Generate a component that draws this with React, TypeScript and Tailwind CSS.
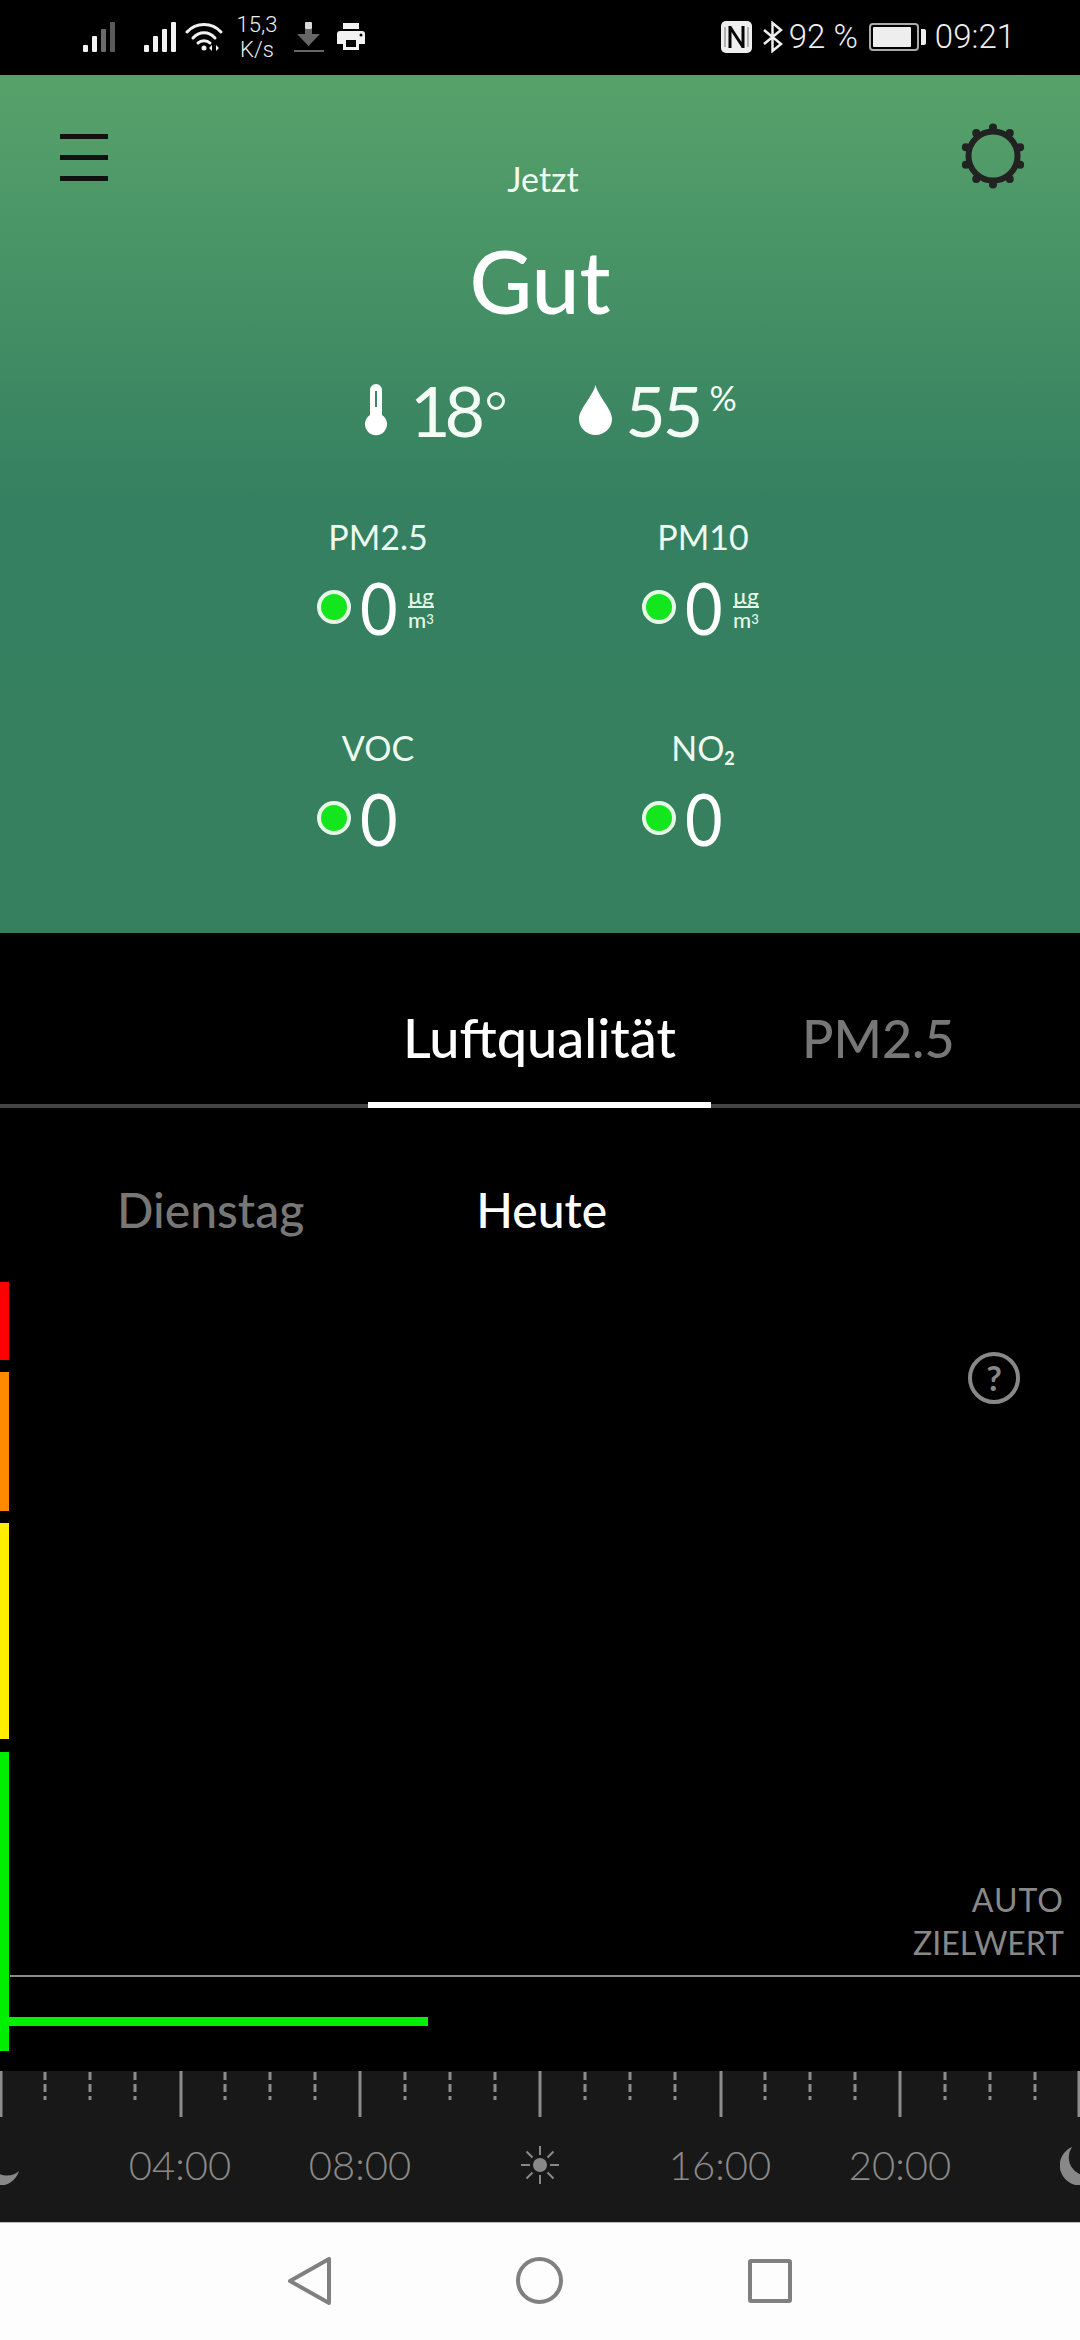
const lato = { fontFamily: 'Lato, sans-serif' };

const SignalIcon = ({ dim }: { dim?: boolean }) => (
  <svg width="33" height="32" viewBox="0 0 33 32">
    <rect x="0" y="24" width="5" height="7" rx="1" fill="#f2f2f2" />
    <rect x="9" y="15" width="5" height="16" rx="1" fill="#f2f2f2" />
    <rect x="18" y="8" width="5" height="23" rx="1" fill={dim ? '#6b6b6b' : '#f2f2f2'} />
    <rect x="27" y="1" width="5" height="30" rx="1" fill={dim ? '#5a5a5a' : '#f2f2f2'} />
  </svg>
);

const WifiIcon = () => (
  <svg width="38" height="32" viewBox="0 0 38 32" fill="none" stroke="#f2f2f2" strokeWidth="3" strokeLinecap="round">
    <path d="M2 11C11 1 27 1 36 11" />
    <path d="M8 17C14 10 24 10 30 17" />
    <path d="M13 22C16 19 22 19 25 22" />
    <circle cx="19" cy="27" r="2.5" fill="#f2f2f2" stroke="none" />
    <path d="M27 24v6l-3-3zM31 24v6l3-3z" fill="#f2f2f2" stroke="none" />
  </svg>
);

const DownloadIcon = () => (
  <svg width="30" height="32" viewBox="0 0 30 32">
    <rect x="11" y="1" width="7" height="7" rx="1" fill="#d8d8d8" />
    <path d="M11 8h7v5h8L14.500 25 3 13h8z" fill="#666" />
    <rect x="0" y="29" width="30" height="2" fill="#666" />
  </svg>
);

const PrinterIcon = () => (
  <svg width="28" height="28" viewBox="0 0 28 28">
    <path d="M6 0h16v6H6z" fill="#f2f2f2" />
    <path
      fillRule="evenodd"
      d="M3 8h22a3 3 0 0 1 3 3v10h-6v6H6v-6H0V11a3 3 0 0 1 3-3zM9 17v7h10v-7z"
      fill="#f2f2f2"
    />
    <circle cx="24" cy="12" r="1.500" fill="#000" />
  </svg>
);

const NfcIcon = () => (
  <svg width="31" height="32" viewBox="0 0 31 32">
    <rect x="0" y="0" width="31" height="32" rx="5" fill="#eeeeee" />
    <path d="M9 5v22M22 5v22M9 6l13 20" fill="none" stroke="#000" strokeWidth="3" />
    <path d="M4 6v20M27 6v20" stroke="#777" strokeWidth="1" />
  </svg>
);

const BluetoothIcon = () => (
  <svg width="21" height="32" viewBox="0 0 21 32" fill="none" stroke="#eeeeee" strokeWidth="2.500">
    <path d="M2 9l17 14-8.500 7V2L19 9 2 23" />
  </svg>
);

const BatteryIcon = () => (
  <div className="flex items-center gap-[2px]">
    <div className="h-[28px] w-[50px] rounded-[4px] border-2 border-[#aaaaaa] p-[2px]">
      <div className="h-full w-[92%] rounded-[1px] bg-[#eeeeee]" />
    </div>
    <div className="h-[16px] w-[5px] rounded-r-[2px] bg-[#eeeeee]" />
  </div>
);

const StatusBar = () => (
  <div
    className="flex h-[75px] items-center justify-between bg-black pb-[2px] pl-[83px] pr-[65px] text-[#eeeeee]"
    style={{ fontFamily: 'Roboto, sans-serif' }}
  >
    <div className="flex items-center">
      <SignalIcon dim />
      <div className="ml-[28px]">
        <SignalIcon />
      </div>
      <div className="ml-[8px]">
        <WifiIcon />
      </div>
      <div className="ml-[12px] flex w-[44px] flex-col items-center text-[22px] font-light leading-[25px]">
        <span>15,3</span>
        <span>K/s</span>
      </div>
      <div className="ml-[15px]">
        <DownloadIcon />
      </div>
      <div className="ml-[13px]">
        <PrinterIcon />
      </div>
    </div>
    <div className="flex items-center">
      <NfcIcon />
      <div className="ml-[10px]">
        <BluetoothIcon />
      </div>
      <span className="ml-[6px] text-[33px] font-light">92 %</span>
      <div className="ml-[11px]">
        <BatteryIcon />
      </div>
      <span className="ml-[9px] text-[33px] font-light">09:21</span>
    </div>
  </div>
);

const GearIcon = () => {
  const teeth = [0, 1, 2, 3, 4, 5, 6, 7, 8, 9].map((i) => {
    const a = ((-90 + i * 36) * Math.PI) / 180;
    return { x: 33 + 28.5 * Math.cos(a), y: 33 + 28.5 * Math.sin(a) };
  });
  return (
    <svg width="66" height="66" viewBox="0 0 66 66">
      <circle cx="33" cy="33" r="24.500" fill="none" stroke="#222222" strokeWidth="6" />
      {teeth.map((t, i) => (
        <circle key={i} cx={t.x} cy={t.y} r="4" fill="#222222" />
      ))}
    </svg>
  );
};

const ThermometerIcon = () => (
  <svg width="22" height="52" viewBox="0 0 22 52">
    <path
      fillRule="evenodd"
      d="M5 31V6a6 6 0 0 1 12 0v25a11 11 0 1 1-12 0zM10 7v16h2V7z"
      fill="#ffffff"
    />
  </svg>
);

const DropIcon = () => (
  <svg width="33" height="50" viewBox="0 0 33 50">
    <path d="M16.500 0C19 11 33 24 33 34a16.500 16 0 0 1-33 0C0 24 14 11 16.500 0z" fill="#ffffff" />
  </svg>
);

const Metric = ({ label, sub, unit }: { label: string; sub?: string; unit?: boolean }) => (
  <div className="h-[211px] w-[325px]">
    <div className="flex h-[40px] w-[122px] items-center justify-center whitespace-nowrap text-[34px] leading-[40px] text-[#eefaf0]">
      {label}
      {sub && <sub className="mt-[10px] text-[18px] font-bold leading-none">{sub}</sub>}
    </div>
    <div className="mt-[24px] flex h-[52px] items-center">
      <div className="h-[34px] w-[34px] rounded-full border-[4px] border-[#e6f7e6] bg-[#14e61e]" />
      <span className="ml-[9px] inline-block w-[38px] origin-left scale-x-[0.9] text-[72px] leading-[52px] text-white">
        0
      </span>
      {unit && (
        <div className="ml-[10px] flex flex-col items-center text-[22px] font-medium leading-[17px] text-[#e6f7e6]">
          <span className="border-b-2 border-[#e6f7e6] pb-[2px]">µg</span>
          <span className="pt-[3px]">
            m<span className="align-top text-[13px]">3</span>
          </span>
        </div>
      )}
    </div>
  </div>
);

const Hero = () => (
  <div className="h-[858px] bg-gradient-to-b from-[#57a26a] via-[#348060] via-[50%] to-[#37805f] pt-[48px]" style={lato}>
    <div className="grid h-[76px] grid-cols-[1fr_auto_1fr] pl-[60px] pr-[54px]">
      <div className="mt-[11px] flex flex-col gap-[16px]">
        <div className="h-[5px] w-[48px] bg-[#111111]" />
        <div className="h-[5px] w-[48px] bg-[#111111]" />
        <div className="h-[5px] w-[48px] bg-[#111111]" />
      </div>
      <div className="pt-[37px] text-[34px] leading-[38px] text-[#f0fbf2]">Jetzt</div>
      <div className="flex justify-end">
        <GearIcon />
      </div>
    </div>
    <div className="mt-[40px] text-center text-[86px] font-medium leading-[84px] text-white">Gut</div>
    <div className="mt-[52px] flex h-[70px] items-center pl-[365px] text-[#f4fcf6]">
      <ThermometerIcon />
      <span className="ml-[23px] text-[70px] leading-[70px] tracking-[-6px]">18</span>
      <span className="mb-[18px] ml-[8px] h-[18px] w-[18px] rounded-full border-[3px] border-[#f4fcf6]" />
      <div className="ml-[74px]">
        <DropIcon />
      </div>
      <span className="ml-[13px] text-[70px] leading-[70px] tracking-[-3px]">55</span>
      <span className="mb-[24px] ml-[9px] text-[34px] leading-[30px]">%</span>
    </div>
    <div className="mt-[72px] flex w-[1080px] flex-wrap pl-[317px]">
      <Metric label="PM2.5" unit />
      <Metric label="PM10" unit />
      <Metric label="VOC" />
      <Metric label="NO" sub="2" />
    </div>
  </div>
);

const Tabs = () => (
  <div style={lato}>
    <div className="flex h-[175px] border-b-[4px] border-[#444444] pl-[368px]">
      <div className="-mb-[4px] flex h-[175px] w-[343px] items-center justify-center border-b-[6px] border-white pt-[41px] text-[54px] font-medium leading-none text-white">
        Luftqualität
      </div>
      <div className="ml-[91px] flex h-[175px] items-center pb-[6px] pt-[41px] text-[52px] font-medium leading-none text-[#777777]">
        PM2.5
      </div>
    </div>
    <div className="flex h-[132px] items-end text-[48px] font-medium leading-[60px]">
      <span className="ml-[117px] text-[#777777]">Dienstag</span>
      <span className="ml-[172px] text-white">Heute</span>
    </div>
  </div>
);

// level scale on the left edge plus the auto target line and the reading
const Chart = () => (
  <div className="relative h-[831px]" style={lato}>
    <svg width="1080" height="831" viewBox="0 0 1080 831" className="block">
      <rect x="0" y="42" width="9" height="78" fill="#ff0000" />
      <rect x="0" y="132" width="9" height="139" fill="#ff8a00" />
      <rect x="0" y="283" width="9" height="216" fill="#ffee00" />
      <rect x="0" y="512" width="9" height="299" fill="#00ee00" />
      <rect x="10" y="735" width="1070" height="2" fill="#8a8a8a" />
      <rect x="0" y="777" width="428" height="9" fill="#00f000" />
    </svg>
    <div className="absolute left-[968px] top-[112px] flex h-[52px] w-[52px] items-center justify-center rounded-full border-[4px] border-[#888888] text-[34px] font-bold leading-none text-[#888888]">
      ?
    </div>
    <div className="absolute right-[16px] top-[638px] text-right text-[32px] leading-[43px] text-[#888888]">
      <div className="tracking-[1px]">AUTO</div>
      <div>ZIELWERT</div>
    </div>
  </div>
);

const Ruler = () => {
  const major = [1, 181, 360, 540, 721, 900, 1079];
  const minor = [45, 90, 135, 225, 270, 315, 405, 450, 495, 585, 630, 675, 765, 810, 855, 945, 990, 1035];
  return (
    <svg width="1080" height="46" viewBox="0 0 1080 46" className="block">
      {major.map((x) => (
        <rect key={x} x={x - 1.5} y="0" width="3" height="46" fill="#8c8c8c" />
      ))}
      {minor.map((x) => (
        <path key={x} d={`M${x} 1V29`} stroke="#8c8c8c" strokeWidth="3" strokeDasharray="8 4" />
      ))}
    </svg>
  );
};

const SunIcon = () => (
  <svg width="40" height="40" viewBox="0 0 40 40" stroke="#888888" strokeWidth="2">
    <circle cx="20" cy="20" r="7" fill="#888888" stroke="none" />
    <path d="M20 1v9M20 30v9M1 20h9M30 20h9M6.500 6.500l6 6M27.500 27.500l6 6M33.500 6.500l-6 6M12.500 27.500l-6 6" />
  </svg>
);

const MoonIcon = () => (
  <svg width="40" height="40" viewBox="-20 -20 40 40">
    <path d="M-8-18A20 20 0 1 0 19 6A18.200 18.200 0 0 1-8-18z" fill="#888888" />
  </svg>
);

const Timeline = () => (
  <div className="h-[151px] overflow-hidden bg-[#181818]" style={lato}>
    <Ruler />
    <div className="mt-[26px] grid grid-cols-[repeat(7,180px)] -ml-[90px] w-[1260px] items-center text-center text-[40px] font-light leading-[44px] text-[#8a8a8a]">
      <div className="flex justify-center">
        <MoonIcon />
      </div>
      <div>04:00</div>
      <div>08:00</div>
      <div className="flex justify-center">
        <SunIcon />
      </div>
      <div>16:00</div>
      <div>20:00</div>
      <div className="flex justify-center">
        <MoonIcon />
      </div>
    </div>
  </div>
);

const NavBar = () => (
  <div className="flex h-[118px] items-center border-t border-[#bbbbbb] bg-[#fdfdfd] pb-[2px] pl-[288px]">
    <svg width="44" height="48" viewBox="0 0 44 48" fill="none" stroke="#808080" strokeWidth="4" strokeLinejoin="round">
      <path d="M41 2v44L2 24z" />
    </svg>
    <div className="ml-[184px] h-[47px] w-[47px] rounded-full border-[4px] border-[#808080]" />
    <div className="ml-[185px] h-[44px] w-[44px] rounded-[3px] border-[4px] border-[#808080]" />
  </div>
);

export default function App() {
  return (
    <div className="h-[2340px] w-[1080px] overflow-hidden bg-black">
      <StatusBar />
      <Hero />
      <Tabs />
      <Chart />
      <Timeline />
      <NavBar />
    </div>
  );
}
